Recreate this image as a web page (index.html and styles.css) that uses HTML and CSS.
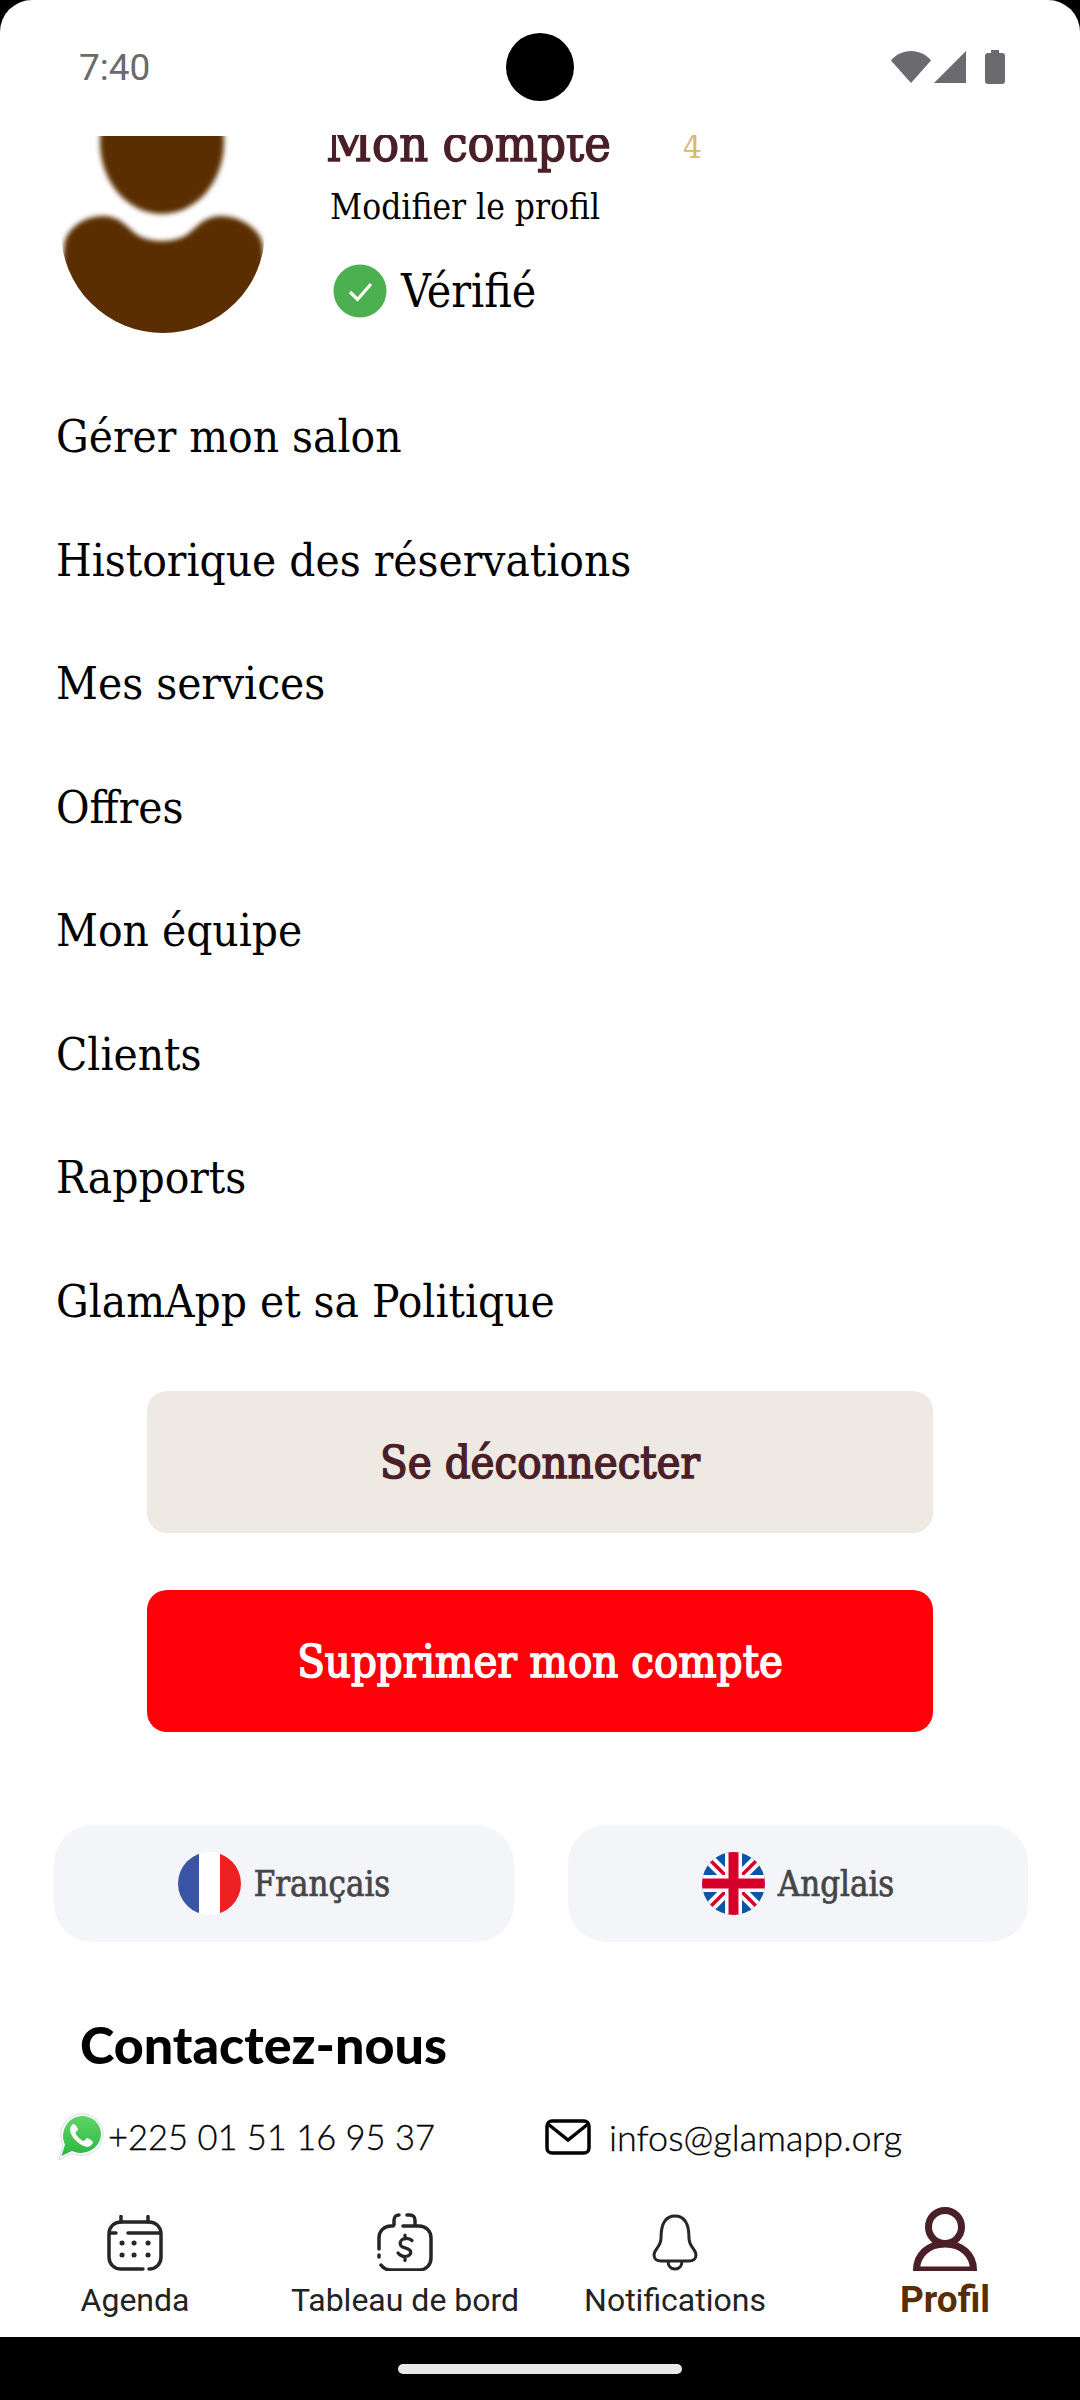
FILE: index.html

```html
<!DOCTYPE html>
<html lang="fr">
<head>
  <meta charset="UTF-8" />
  <meta name="viewport" content="width=device-width, initial-scale=1.0"/>
  <title>Mon compte</title>
  <link rel="stylesheet" href="styles.css">
</head>
<body>
  <div class="phone">
    <div class="screen">
      <div class="statusbar">
        <span class="time">7:40</span>
        <span class="camera"></span>
        <div class="status-icons">
          <svg width="40" height="32" viewBox="0 0 40 32"><path d="M0 9.500C5 3.500 12 0 20 0s15 3.500 20 9.500L20 32z" fill="#6b6a6f"/></svg>
          <svg width="32" height="32" viewBox="0 0 32 32"><path d="M0 32 32 0v32z" fill="#6b6a6f"/></svg>
          <svg class="battery" width="20" height="34" viewBox="0 0 20 34"><path d="M6 0h8v3h3a3 3 0 0 1 3 3v25a3 3 0 0 1-3 3H3a3 3 0 0 1-3-3V6a3 3 0 0 1 3-3h3z" fill="#6b6a6f"/></svg>
        </div>
      </div>

      <div class="content">
        <div class="profile">
          <svg class="avatar" width="210" height="197" viewBox="0 0 210 197">
            <defs>
              <clipPath id="avatarClip"><path d="M1 -10H205V95A102 102 0 0 1 1 95z"/></clipPath>
              <filter id="soft" x="-10%" y="-10%" width="120%" height="120%"><feGaussianBlur stdDeviation="2.500"/></filter>
            </defs>
            <g clip-path="url(#avatarClip)">
              <g filter="url(#soft)" fill="#5a2d00">
                <ellipse cx="102" cy="6" rx="62" ry="72"/>
                <path d="M4 112C4 95 22 80 43 80 60 80 68 92 76 98 85 104 95 105 102 105S119 104 128 98C136 92 144 80 161 80 182 80 203 95 203 112L215 225H-10z"/>
              </g>
            </g>
          </svg>
          <div class="profile-text">
            <div class="title-row">
              <span class="title">Mon compte</span>
              <span class="count">4</span>
            </div>
            <div class="edit-link">Modifier le profil</div>
            <div class="verified">
              <svg width="54" height="54" viewBox="0 0 54 54">
                <circle cx="27" cy="27" r="26.500" fill="#4caf50"/>
                <path d="M17 28l7.500 7.500L38 20" fill="none" stroke="#fff" stroke-width="3.200"/>
              </svg>
              <span>Vérifié</span>
            </div>
          </div>
        </div>

        <ul class="menu">
          <li>Gérer mon salon</li>
          <li>Historique des réservations</li>
          <li>Mes services</li>
          <li>Offres</li>
          <li>Mon équipe</li>
          <li>Clients</li>
          <li>Rapports</li>
          <li>GlamApp et sa Politique</li>
        </ul>

        <div class="actions">
          <button class="btn btn-logout">Se déconnecter</button>
          <button class="btn btn-delete">Supprimer mon compte</button>
        </div>

        <div class="langs">
          <div class="lang">
            <svg width="63" height="63" viewBox="0 0 63 63">
              <defs><clipPath id="fr"><circle cx="31.500" cy="31.500" r="31.500"/></clipPath></defs>
              <g clip-path="url(#fr)">
                <rect width="21" height="63" fill="#3a55a5"/>
                <rect x="21" width="21" height="63" fill="#fff"/>
                <rect x="42" width="21" height="63" fill="#ed2024"/>
              </g>
            </svg>
            <span>Français</span>
          </div>
          <div class="lang">
            <svg width="63" height="63" viewBox="0 0 63 63">
              <defs><clipPath id="uk"><circle cx="31.500" cy="31.500" r="31.500"/></clipPath></defs>
              <g clip-path="url(#uk)">
                <rect width="63" height="63" fill="#0a55a8"/>
                <path d="M0 0 63 63M63 0 0 63" stroke="#fff" stroke-width="11"/>
                <path d="M0 0 31 31M63 0 32 31M0 63 31 32M63 63 32 32" stroke="#d4002a" stroke-width="3.500"/>
                <path d="M31.500 0v63M0 31.500h63" stroke="#fff" stroke-width="17"/>
                <path d="M31.500 0v63M0 31.500h63" stroke="#d4002a" stroke-width="10"/>
              </g>
            </svg>
            <span>Anglais</span>
          </div>
        </div>

        <h2 class="contact-title">Contactez-nous</h2>
        <div class="contact-row">
          <div class="contact-item phone-item">
            <svg width="46" height="48" viewBox="0 0 46 48">
              <defs><linearGradient id="wa" x1="0" y1="0" x2="0" y2="1"><stop offset="0" stop-color="#5fd568"/><stop offset="1" stop-color="#2bb741"/></linearGradient></defs>
              <path d="M1 47 5 32C-2 18 8 1 24 1c12 0 21 9 21 20 0 16-17 26-31 19z" fill="#fff" stroke="#d6dadf" stroke-width="1"/>
              <path d="M3.500 43 7 31.500C1 19 10 3 24 3c11 0 19 8 19 18 0 14-16 23-29 17z" fill="url(#wa)"/>
              <path d="M16 11c-2 0-4 3-4 6 1 8 9 15 17 17 3 0 6-3 6-5 0-1-5-4-6-4s-2 3-3.500 3c-3-1-7-5-8-8-.5-1 2.500-2.500 2.500-3.500S17 11 16 11z" fill="#fff"/>
            </svg>
            <span>+225 01 51 16 95 37</span>
          </div>
          <div class="contact-item mail-item">
            <svg width="46" height="36" viewBox="0 0 46 36">
              <rect x="2" y="2" width="42" height="32" rx="5" fill="none" stroke="#000" stroke-width="3.500"/>
              <path d="M3 5 23 21 43 5" fill="none" stroke="#000" stroke-width="3.500"/>
            </svg>
            <span>infos@glamapp.org</span>
          </div>
        </div>
      </div>

      <nav class="tabbar">
        <div class="tab">
          <svg width="56" height="56" viewBox="0 0 56 56" fill="none" stroke="#26262a" stroke-width="3.500" stroke-linecap="round">
            <path d="M36 54H14C7 54 2 49 2 42V19C2 12 7 7 14 7H42C49 7 54 12 54 19V42C54 49 49 54 42 54"/>
            <path d="M14 1.500V7M41 1.500V7M3 18H9M21 18H53"/>
            <g stroke-width="5"><path d="M15 28h.1M27 28h.1M41 28h.1M15 40h.1M27 40h.1M41 40h.1"/></g>
          </svg>
          <span>Agenda</span>
        </div>
        <div class="tab">
          <svg width="56" height="58" viewBox="0 0 56 58" fill="none" stroke="#26262a" stroke-width="3.500" stroke-linecap="round">
            <path d="M17 12V7C17 4 19 2 22 2M30 2H33C36 2 38 4 38 7V12"/>
            <path d="M2 36V25C2 18 7 13 14 13H16M26 13H42C49 13 54 18 54 25V45C54 52 49 57 42 57H14C9 57 6 55 4 52M2 42V44"/>
            <path d="M35 27.500C33 25.500 30 25 27.500 25.500 24 26.500 22.500 29 23.500 32 24.500 35 32 35 33.500 38 34.500 41 32 43.500 28 43.500 25 43.500 22.500 42 21 40M28 22V26M28 43.500V47.500" stroke-width="3.200"/>
          </svg>
          <span>Tableau de bord</span>
        </div>
        <div class="tab">
          <svg width="46" height="57" viewBox="0 0 46 57" fill="none" stroke="#26262a" stroke-width="3" stroke-linejoin="round">
            <path d="M23 2C12 2 9 13 9 24 9 33 2 35 2 41 2 45 5 47 9 47H37C41 47 44 45 44 41 44 35 37 33 37 24 37 13 34 2 23 2z"/>
            <path d="M16 47C16 52 19 55 23 55S30 52 30 47"/>
          </svg>
          <span>Notifications</span>
        </div>
        <div class="tab tab-active">
          <svg width="64" height="64" viewBox="0 0 64 64" fill="none" stroke="#4a1f28" stroke-width="7">
            <circle cx="32" cy="20" r="16.500"/>
            <path d="M3.500 63C3.500 48 15 37 32 37S60.500 48 60.500 63z"/>
          </svg>
          <span>Profil</span>
        </div>
      </nav>
    </div>
    <div class="gesture">
      <span class="gesture-bar"></span>
    </div>
  </div>
</body>
</html>
```

FILE: styles.css

```css
* {
  box-sizing: border-box;
}
body {
  margin: 0;
  background: #000;
  font-family: "DejaVu Serif Condensed", "Liberation Serif", serif;
}
.phone {
  width: 1080px;
  height: 2400px;
  display: flex;
  flex-direction: column;
  background: #000;
  overflow: hidden;
}
.screen {
  height: 2337px;
  display: flex;
  flex-direction: column;
  background: #fff;
  border-radius: 32px 32px 0 0;
}

/* status bar */
.statusbar {
  flex: 0 0 135px;
  display: grid;
  grid-template-columns: 1fr 68px 1fr;
  align-items: center;
  padding: 0 75px 1px 75px;
}
.time {
  margin-left: 4px;
  font-family: Roboto, sans-serif;
  font-size: 37px;
  color: #6b6a6f;
}
.camera {
  width: 68px;
  height: 68px;
  border-radius: 50%;
  background: #000;
}
.status-icons {
  display: flex;
  justify-content: flex-end;
  align-items: center;
  gap: 3px;
}
.battery {
  margin-left: 16px;
}

/* scrolled content */
.content {
  flex: 1;
  overflow: hidden;
  min-height: 0;
}
.profile {
  margin-top: -22px;
  height: 262px;
  display: flex;
  padding-left: 60px;
}
.avatar {
  align-self: flex-end;
  margin-bottom: 42px;
}
.profile-text {
  margin-left: 58px;
}
.title-row {
  display: flex;
  height: 60px;
  line-height: 62px;
}
.title {
  margin-left: -2px;
  font-size: 50px;
  -webkit-text-stroke: 1.4px #4a1f28;
  color: #4a1f28;
  width: 357px;
}
.count {
  margin-top: 22px;
  font-size: 33px;
  line-height: 24px;
  color: #d9b96a;
}
.edit-link {
  margin: 9px 0 0 2px;
  font-size: 35px;
  line-height: 50px;
  color: #000;
}
.verified {
  margin: 32px 0 0 5px;
  display: flex;
  align-items: center;
  gap: 14px;
  font-size: 46px;
  height: 54px;
  color: #000;
}

.menu {
  list-style: none;
  margin: 0;
  padding: 0 0 0 56px;
}
.menu li {
  height: 123.500px;
  line-height: 123.500px;
  font-size: 45.500px;
  color: #000;
}

.actions {
  margin-top: 28px;
  display: flex;
  flex-direction: column;
  align-items: center;
  gap: 57px;
}
.btn {
  width: 786px;
  height: 142px;
  border: none;
  border-radius: 20px;
  font-family: "DejaVu Serif Condensed", "Liberation Serif", serif;
  font-size: 45px;
  -webkit-text-stroke: 1.5px currentColor;
}
.btn-logout {
  background: #efe9e4;
  color: #4a1f28;
}
.btn-delete {
  background: #ff0008;
  color: #fff;
}

.langs {
  margin-top: 93px;
  padding: 0 52px 0 54px;
  display: grid;
  grid-template-columns: 460px 460px;
  justify-content: space-between;
}
.lang {
  height: 117px;
  border-radius: 38px;
  background: #f3f5f8;
  display: flex;
  align-items: center;
  justify-content: center;
  gap: 13px;
  font-size: 34.500px;
  -webkit-text-stroke: 0.7px #454548;
  color: #454548;
}

.contact-title {
  margin: 72px 0 0 80px;
  font-family: Lato, sans-serif;
  font-size: 52px;
  line-height: 60px;
  font-weight: 900;
  color: #000;
}
.contact-row {
  margin-top: 38px;
  padding-left: 58px;
  display: flex;
  font-family: Lato, sans-serif;
  font-weight: 300;
  line-height: 50px;
  -webkit-text-stroke: 0.3px #000;
  color: #000;
}
.contact-item {
  display: flex;
  align-items: center;
}
.phone-item {
  width: 487px;
  gap: 4px;
  font-size: 34.500px;
}
.mail-item {
  gap: 18px;
  font-size: 36px;
}

/* bottom tabs */
.tabbar {
  flex: 0 0 140px;
  display: grid;
  grid-template-columns: repeat(4, 1fr);
  font-family: Roboto, sans-serif;
  font-size: 32px;
  color: #222;
}
.tab {
  display: flex;
  flex-direction: column;
  align-items: center;
  justify-content: flex-end;
  padding-bottom: 19px;
}
.tab span {
  margin-top: 11px;
  line-height: 36px;
}
.tab-active {
  color: #5a2d00;
  font-weight: bold;
  font-size: 37px;
}

.gesture {
  flex: 1;
  display: flex;
  justify-content: center;
  padding-top: 27px;
}
.gesture-bar {
  width: 284px;
  height: 10px;
  border-radius: 5px;
  background: #e8e8ea;
}
```
